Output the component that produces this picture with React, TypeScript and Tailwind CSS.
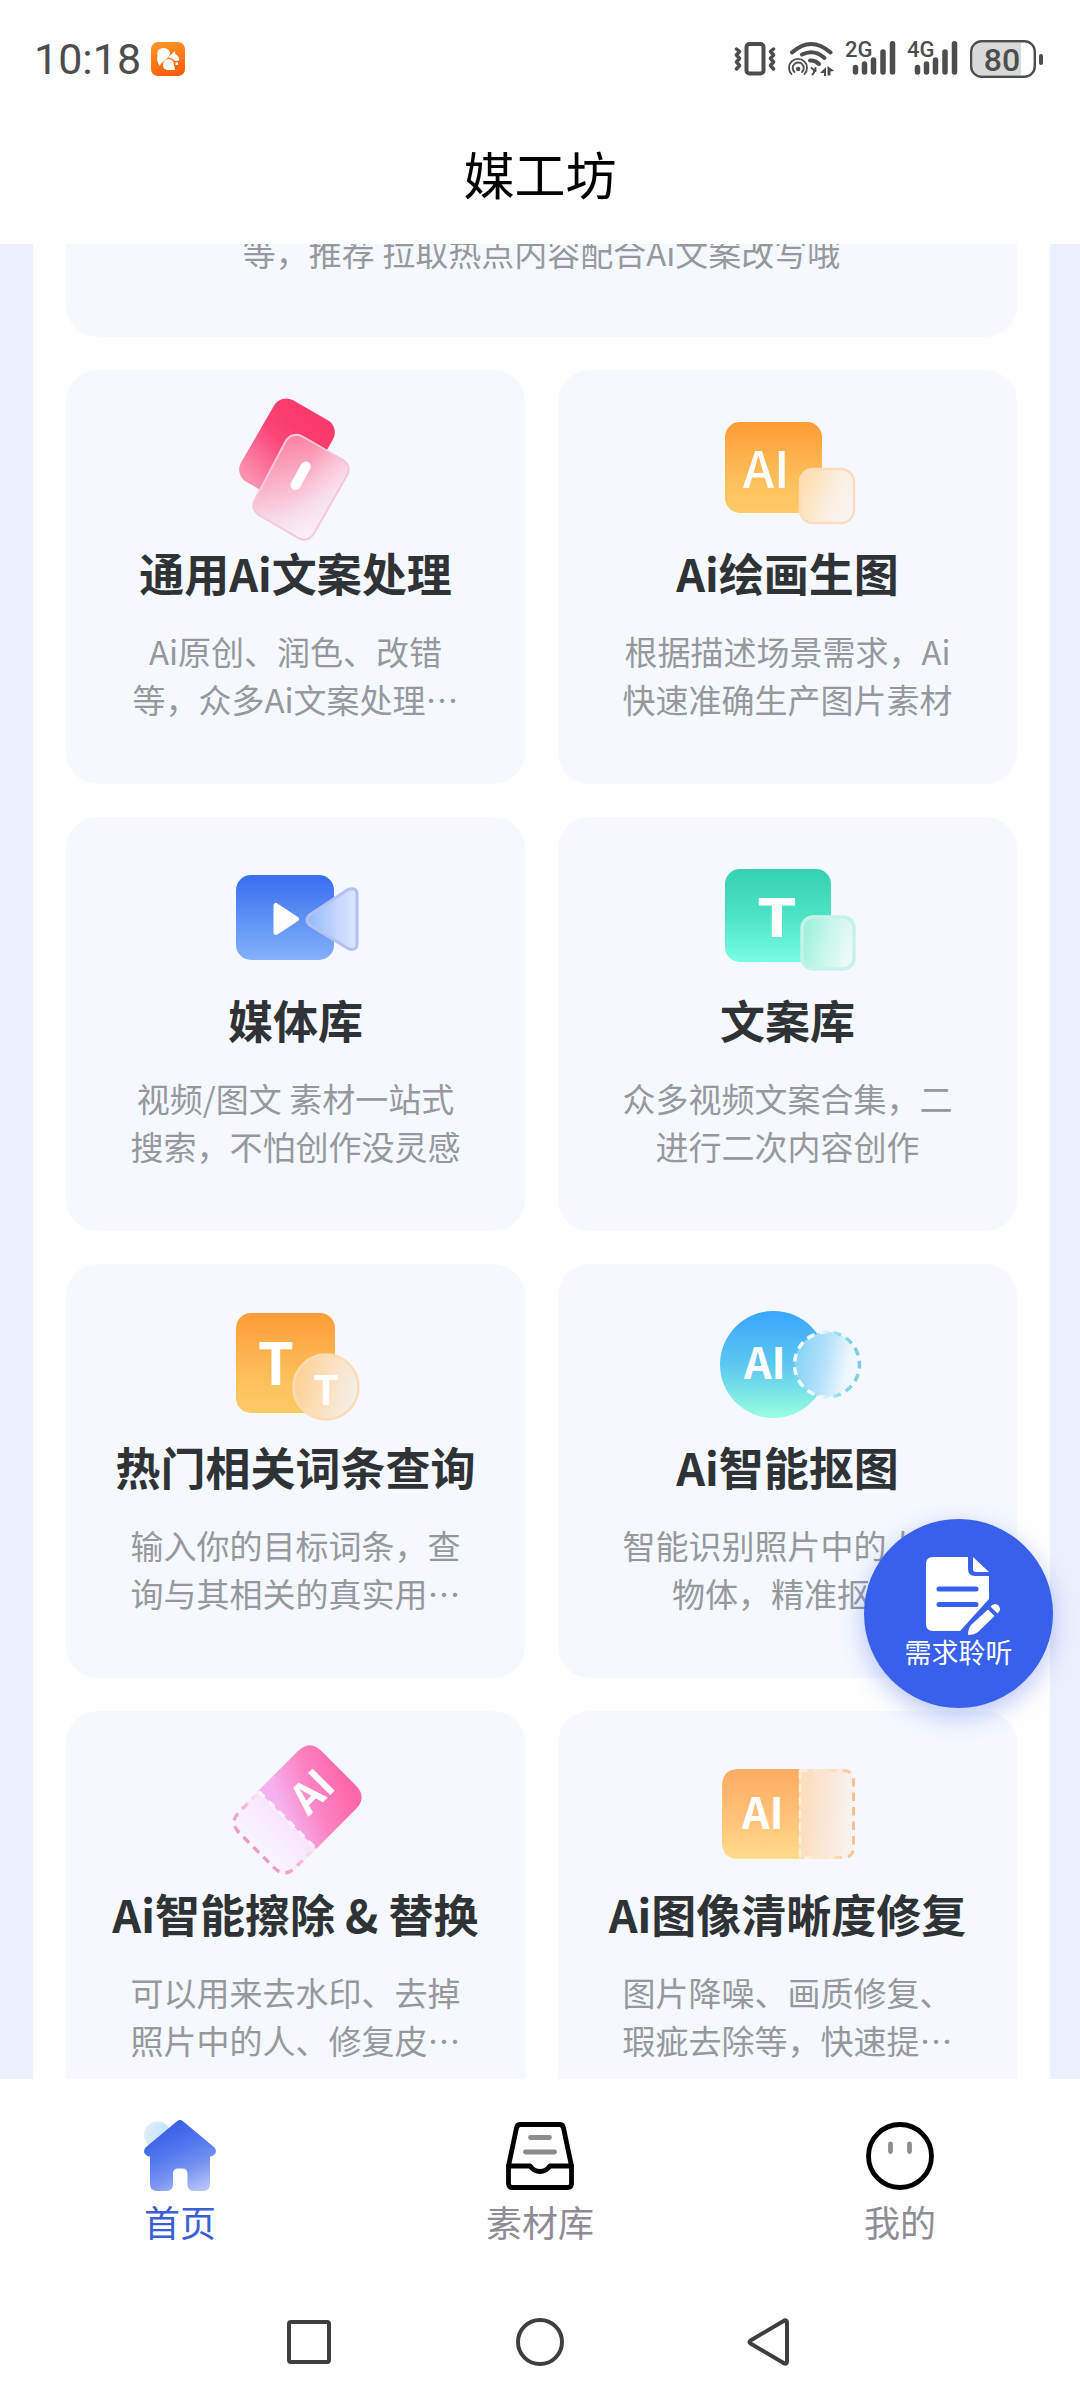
import React from "react";

type Feature = {
  title: string;
  desc: string;
  icon: React.ReactNode;
};

const glyph = "font-['Noto_Sans_CJK_SC',sans-serif] fill-white";

function IconFrame({ children }: { children: React.ReactNode }) {
  return (
    <svg viewBox="1 0 160 156" className="h-[156px] w-40" aria-hidden="true">
      {children}
    </svg>
  );
}

function CopyIcon() {
  return (
    <IconFrame>
      <defs>
        <linearGradient id="copyBack" x1="0.2" y1="0" x2="0" y2="1">
          <stop offset="0.1" stopColor="#f93b6c" />
          <stop offset="0.4" stopColor="#fa4676" />
          <stop offset="0.9" stopColor="#fd8fb0" />
        </linearGradient>
        <linearGradient id="copyFront" gradientUnits="userSpaceOnUse" x1="74" y1="50" x2="96" y2="148">
          <stop offset="0" stopColor="#fb86a6" />
          <stop offset="0.4" stopColor="#fbb2c8" />
          <stop offset="0.7" stopColor="#f8d6e4" />
          <stop offset="1" stopColor="#fbf4fc" />
        </linearGradient>
        <linearGradient id="copySheen" gradientUnits="userSpaceOnUse" x1="84" y1="92" x2="124" y2="112">
          <stop offset="0" stopColor="#f8ecf7" stopOpacity="0" />
          <stop offset="1" stopColor="#f8ecf7" stopOpacity="0.75" />
        </linearGradient>
      </defs>
      <rect x="38" y="14" width="68" height="94" rx="14" transform="rotate(30 72 61)" fill="url(#copyBack)" />
      <path
        d="M77.500 45.500q5-2 11 1.500l39 22.500q9 6 5 15l-33 58q-6 10-15 6l-40-23q-9-6-5-15l31-59q3-5 7-6z"
        fill="url(#copyFront)"
      />
      <path
        d="M77.500 45.500q5-2 11 1.500l39 22.500q9 6 5 15l-33 58q-6 10-15 6l-40-23q-9-6-5-15l31-59q3-5 7-6z"
        fill="url(#copySheen)"
        stroke="#f7c6da"
        strokeWidth="2"
      />
      <path d="M90.700 76.500L80.500 95" stroke="#fff" strokeWidth="10" strokeLinecap="round" />
    </IconFrame>
  );
}

function PaintIcon() {
  return (
    <IconFrame>
      <defs>
        <linearGradient id="paintBack" x1="0" y1="0" x2="0" y2="1">
          <stop offset="0" stopColor="#fe9c36" />
          <stop offset="0.65" stopColor="#fcc05a" />
          <stop offset="1" stopColor="#fdcb66" />
        </linearGradient>
        <linearGradient id="paintFront" x1="0" y1="0.2" x2="1" y2="0.6">
          <stop offset="0" stopColor="#fedcab" />
          <stop offset="0.6" stopColor="#fbeede" />
          <stop offset="1" stopColor="#f8f4f3" />
        </linearGradient>
      </defs>
      <rect x="18" y="32" width="97" height="91" rx="15" fill="url(#paintBack)" />
      <text x="36" y="98" fontSize="50" fontWeight="500" className={glyph}>AI</text>
      <rect x="93" y="79" width="54" height="54" rx="13" fill="url(#paintFront)" stroke="#fddcbd" strokeWidth="2.500" />
    </IconFrame>
  );
}

function MediaIcon() {
  return (
    <IconFrame>
      <defs>
        <linearGradient id="mediaBack" x1="0" y1="0" x2="0" y2="1">
          <stop offset="0.05" stopColor="#3d70f0" />
          <stop offset="0.5" stopColor="#5c91f5" />
          <stop offset="1" stopColor="#84b1fb" />
        </linearGradient>
        <linearGradient id="mediaFront" x1="0" y1="0" x2="1" y2="0">
          <stop offset="0" stopColor="#92b9fb" />
          <stop offset="0.5" stopColor="#bcd1fb" />
          <stop offset="1" stopColor="#dfe8fc" />
        </linearGradient>
      </defs>
      <rect x="21" y="38" width="98" height="85" rx="15" fill="url(#mediaBack)" />
      <path d="M61 68.500v27L81.500 82z" fill="#fff" stroke="#fff" strokeWidth="5" strokeLinejoin="round" />
      <path
        d="M94.500 78L133 52.500q9-3 9 5v49q0 8-9 5L94.500 88q-5-5 0-10z"
        fill="url(#mediaFront)"
        stroke="#b5bff3"
        strokeWidth="3"
        strokeLinejoin="round"
      />
    </IconFrame>
  );
}

function TextLibraryIcon() {
  return (
    <IconFrame>
      <defs>
        <linearGradient id="textBack" x1="0" y1="0" x2="0" y2="1">
          <stop offset="0" stopColor="#34d1b2" />
          <stop offset="0.5" stopColor="#4de3c5" />
          <stop offset="1" stopColor="#78fde3" />
        </linearGradient>
        <linearGradient id="textFront" x1="0" y1="0.3" x2="1" y2="0.6">
          <stop offset="0" stopColor="#9cf1dc" />
          <stop offset="0.55" stopColor="#ccf7ec" />
          <stop offset="1" stopColor="#eefaf9" />
        </linearGradient>
      </defs>
      <rect x="18" y="32" width="106" height="93" rx="15" fill="url(#textBack)" />
      <text x="70" y="100" fontSize="54" fontWeight="700" textAnchor="middle" className="fill-white font-['DejaVu_Sans',sans-serif]">T</text>
      <rect x="95" y="80" width="52" height="52" rx="11" fill="url(#textFront)" stroke="#c5f3e9" strokeWidth="3.500" />
    </IconFrame>
  );
}

function HotWordsIcon() {
  return (
    <IconFrame>
      <defs>
        <linearGradient id="hotBack" x1="0" y1="0" x2="0" y2="1">
          <stop offset="0" stopColor="#fe9c38" />
          <stop offset="0.65" stopColor="#fcc05b" />
          <stop offset="1" stopColor="#fdca65" />
        </linearGradient>
        <linearGradient id="hotFront" x1="0" y1="0.3" x2="1" y2="0.55">
          <stop offset="0" stopColor="#fdd091" />
          <stop offset="0.5" stopColor="#fbe0bd" />
          <stop offset="1" stopColor="#f6efea" />
        </linearGradient>
      </defs>
      <rect x="21" y="29" width="99" height="100" rx="15" fill="url(#hotBack)" />
      <text x="61" y="101" fontSize="58" fontWeight="700" textAnchor="middle" className={glyph}>T</text>
      <circle cx="111" cy="103" r="32.500" fill="url(#hotFront)" stroke="#fddcb5" strokeWidth="2.500" />
      <text x="111" y="121" fontSize="41" fontWeight="700" textAnchor="middle" className={glyph}>T</text>
    </IconFrame>
  );
}

function CutoutIcon() {
  return (
    <IconFrame>
      <defs>
        <linearGradient id="cutBack" x1="0" y1="0" x2="0" y2="1">
          <stop offset="0" stopColor="#3aa6fd" />
          <stop offset="0.5" stopColor="#5cc7f0" />
          <stop offset="1" stopColor="#98ffe0" />
        </linearGradient>
        <linearGradient id="cutFront" x1="0" y1="0.4" x2="1" y2="0.6">
          <stop offset="0" stopColor="#84d2f6" />
          <stop offset="0.45" stopColor="#b4e1fa" />
          <stop offset="0.8" stopColor="#ecf6fe" />
          <stop offset="1" stopColor="#f4f8fe" />
        </linearGradient>
        <linearGradient id="cutRing" x1="0" y1="0" x2="1" y2="0">
          <stop offset="0.4" stopColor="#eefafe" />
          <stop offset="0.7" stopColor="#8edcea" />
          <stop offset="1" stopColor="#76cfe0" />
        </linearGradient>
      </defs>
      <circle cx="66.500" cy="80.500" r="53.500" fill="url(#cutBack)" />
      <text x="37" y="95" fontSize="43" fontWeight="700" className={glyph}>AI</text>
      <circle cx="120" cy="80.500" r="32.500" fill="url(#cutFront)" stroke="url(#cutRing)" strokeWidth="3.500" strokeDasharray="8 5.600" strokeDashoffset="4" />
    </IconFrame>
  );
}

function EraseIcon() {
  return (
    <IconFrame>
      <defs>
        <linearGradient id="eraseBack" gradientUnits="userSpaceOnUse" x1="24" y1="-50" x2="-4" y2="14">
          <stop offset="0" stopColor="#ff68aa" />
          <stop offset="0.5" stopColor="#fc84c4" />
          <stop offset="1" stopColor="#f5b2ee" />
        </linearGradient>
        <linearGradient id="eraseFront" x1="0" y1="0" x2="0" y2="1">
          <stop offset="0" stopColor="#f8e4fa" />
          <stop offset="0.5" stopColor="#f8eefd" />
          <stop offset="1" stopColor="#f8f6fe" />
        </linearGradient>
        <linearGradient id="eraseDash" x1="0" y1="0" x2="0" y2="1">
          <stop offset="0" stopColor="#fce8f4" />
          <stop offset="0.5" stopColor="#f4b6d4" />
          <stop offset="1" stopColor="#ee9cc6" />
        </linearGradient>
      </defs>
      <g transform="translate(82 79) rotate(45)">
        <path d="M-41 14v-56q0-17 17-17h48q17 0 17 17v56z" fill="url(#eraseBack)" />
        <path d="M-41 14v28q0 17 17 17h48q17 0 17-17V14z" fill="url(#eraseFront)" />
        <path d="M-39.500 16v26q0 15 15 15h49q15 0 15-15V16" fill="none" stroke="url(#eraseDash)" strokeWidth="3.500" strokeDasharray="8 6" />
        <path d="M-40 14h80" stroke="#fff1fb" strokeWidth="3.500" strokeDasharray="8 6" />
      </g>
      <text x="-20" y="15" fontSize="42" fontWeight="700" transform="translate(97 61) rotate(-45)" className={glyph}>AI</text>
    </IconFrame>
  );
}

function EnhanceIcon() {
  return (
    <IconFrame>
      <defs>
        <linearGradient id="enhanceBack" x1="0" y1="0" x2="0" y2="1">
          <stop offset="0" stopColor="#ffab62" />
          <stop offset="0.5" stopColor="#ffc077" />
          <stop offset="1" stopColor="#ffdc8b" />
        </linearGradient>
        <linearGradient id="enhanceFront" x1="0" y1="0.4" x2="1" y2="0.5">
          <stop offset="0" stopColor="#fddcba" />
          <stop offset="0.6" stopColor="#faeadd" />
          <stop offset="1" stopColor="#f7f4f5" />
        </linearGradient>
        <linearGradient id="enhanceDash" gradientUnits="userSpaceOnUse" x1="92" y1="0" x2="148" y2="0">
          <stop offset="0" stopColor="#fff0dc" />
          <stop offset="0.6" stopColor="#fde0c2" />
          <stop offset="1" stopColor="#fbc08c" />
        </linearGradient>
      </defs>
      <path d="M92 38v90H32q-17 0-17-17V55q0-17 17-17z" fill="url(#enhanceBack)" />
      <path d="M92 38h44q12 0 12 12v66q0 12-12 12H92z" fill="url(#enhanceFront)" />
      <path d="M92 39.500h44q10.500 0 10.500 10.500v66q0 10.500-10.500 10.500H92" fill="none" stroke="url(#enhanceDash)" strokeWidth="3" strokeDasharray="8.500 6" />
      <path d="M93 40v86" stroke="#fff0dc" strokeWidth="2.500" strokeDasharray="8 5" />
      <text x="35" y="98" fontSize="43" fontWeight="700" className={glyph}>AI</text>
    </IconFrame>
  );
}

const features: Feature[] = [
  { title: "通用Ai文案处理", desc: "Ai原创、润色、改错等，众多Ai文案处理…", icon: <CopyIcon /> },
  { title: "Ai绘画生图", desc: "根据描述场景需求，Ai快速准确生产图片素材", icon: <PaintIcon /> },
  { title: "媒体库", desc: "视频/图文 素材一站式搜索，不怕创作没灵感", icon: <MediaIcon /> },
  { title: "文案库", desc: "众多视频文案合集，二进行二次内容创作", icon: <TextLibraryIcon /> },
  { title: "热门相关词条查询", desc: "输入你的目标词条，查询与其相关的真实用…", icon: <HotWordsIcon /> },
  { title: "Ai智能抠图", desc: "智能识别照片中的人和物体，精准抠图", icon: <CutoutIcon /> },
  { title: "Ai智能擦除 & 替换", desc: "可以用来去水印、去掉照片中的人、修复皮…", icon: <EraseIcon /> },
  { title: "Ai图像清晰度修复", desc: "图片降噪、画质修复、瑕疵去除等，快速提…", icon: <EnhanceIcon /> },
];

function FeatureCard({ title, desc, icon }: Feature) {
  return (
    <a href="#" className="flex flex-col items-center rounded-[32px] bg-[#f5f8ff] pt-5 pb-[61px]">
      {icon}
      <h2 className="text-[45px] leading-[54px] font-bold whitespace-nowrap text-[#303335]">{title}</h2>
      <p className="mt-[27px] w-[340px] text-center text-[33px] leading-[48px] text-[#96989e]">{desc}</p>
    </a>
  );
}

function Signal({ label }: { label: string }) {
  return (
    <svg viewBox="0 0 50 36" className="h-9 w-[50px] overflow-visible" role="img" aria-label={label}>
      <text x="-1" y="16" fontSize="22" fontWeight="500" fill="#4d4d4d" className="font-['Roboto',sans-serif]">{label}</text>
      <path d="M9.500 26.500v4.500M18.500 23v8M27.500 19v12M37 11v20M46.500 2.800v28.200" stroke="#4d4d4d" strokeWidth="5.500" strokeLinecap="round" />
    </svg>
  );
}

function StatusBar() {
  return (
    <div className="flex h-[118px] items-center justify-between pr-9 pl-[34px]">
      <div className="flex items-center gap-2.5">
        <span className="font-['Roboto',sans-serif] text-[43px] leading-[48px] text-[#4d4d4d]">10:18</span>
        <svg viewBox="0 0 34 34" className="size-[34px]" aria-hidden="true">
          <defs>
            <linearGradient id="appTile" x1="0.3" y1="0" x2="0.6" y2="1">
              <stop offset="0" stopColor="#ff9526" />
              <stop offset="1" stopColor="#fe5c0a" />
            </linearGradient>
          </defs>
          <rect width="34" height="34" rx="7" fill="url(#appTile)" />
          <path d="M9 24q-4-5-2.500-10Q5 7 11.500 6q6.500 0 7.500 5 0 2.500-2 4.500l-6 5q-2 1.500-2 3.500z" fill="#fff" />
          <path d="M17 15.500l7-6.500.3 3q3.500 1.500 4 6-2 1.500-5 .5-2.500-3-6.300-3z" fill="#fff" />
          <path d="M12 23.500q0-6 5.500-6.500 5.500.5 5.500 6l1 5h-8q-4-1-4-4.500z" fill="#fff" />
          <path d="M24.500 20.500h2.500v2.500h-2.500z" fill="#fff" />
        </svg>
      </div>
      <div className="flex items-center gap-3">
        <svg viewBox="0 0 42 36" className="h-9 w-[42px]" aria-hidden="true" fill="none" stroke="#4d4d4d">
          <rect x="12.500" y="3" width="17" height="29.500" rx="3" strokeWidth="4" />
          <path d="M2.500 8l3 2.500-3 3.500 3 3.500-3 3.500 3 3.500-3 3.500M39.500 8l-3 2.500 3 3.500-3 3.500 3 3.500-3 3.500 3 3.500" strokeWidth="3.500" strokeLinecap="round" strokeLinejoin="round" />
        </svg>
        <svg viewBox="0 0 46 36" className="h-9 w-[46px]" aria-hidden="true" fill="none" stroke="#4d4d4d" strokeLinecap="round">
          <path d="M4 11.500q19-17 38.500 0" strokeWidth="4" />
          <path d="M14 13.500q12-6 22.500 3.500M22 19.500q5-.5 9 3.500" strokeWidth="4" />
          <path d="M3.500 33a9 9 0 1 1 13 0" strokeWidth="1.800" />
          <path d="M6.500 31a5.500 5.500 0 1 1 7.500 0" strokeWidth="1.800" />
          <circle cx="10.200" cy="28" r="2.200" fill="#4d4d4d" stroke="none" />
          <path d="M23.500 27q5 3 1 6.500M27.500 27v3" strokeWidth="2" />
          <path d="M38 26v9h-2v-3h-4zM39.500 25l7 5-4 .5v4h-3z" fill="#4d4d4d" stroke="none" />
        </svg>
        <Signal label="2G" />
        <Signal label="4G" />
        <svg viewBox="0 0 74 38" className="h-[38px] w-[74px]" role="img" aria-label="80%">
          <path d="M51 3v32H12q-9 0-9-9V12q0-9 9-9z" fill="#d9d9d9" />
          <rect x="1.200" y="1.200" width="63.600" height="35.600" rx="10.500" fill="none" stroke="#4d4d4d" strokeWidth="2.400" />
          <rect x="69" y="14" width="4" height="11" rx="2" fill="#4d4d4d" />
          <text x="32" y="30.500" fontSize="32" fontWeight="500" textAnchor="middle" fill="#4d4d4d" className="font-['Roboto',sans-serif]">80</text>
        </svg>
      </div>
    </div>
  );
}

function HomeIcon() {
  return (
    <svg viewBox="0 0 72 72" className="size-[72px]" aria-hidden="true">
      <defs>
        <linearGradient id="homeBody" x1="0.300" y1="0" x2="0.750" y2="1">
          <stop offset="0" stopColor="#3459e4" />
          <stop offset="0.400" stopColor="#5077ef" />
          <stop offset="0.700" stopColor="#7893f0" />
          <stop offset="1" stopColor="#b4c3f9" />
        </linearGradient>
        <linearGradient id="homeSun" x1="0" y1="0.300" x2="1" y2="0.700">
          <stop offset="0" stopColor="#e2effd" />
          <stop offset="1" stopColor="#bcdcf9" />
        </linearGradient>
      </defs>
      <circle cx="13.500" cy="16" r="13.500" fill="url(#homeSun)" />
      <path
        d="M33 2.200q3-2.600 6 0L70.500 28.500q3 4 0 7-1.500 2-4.500 2V65q0 7-7 7H50q-6.500 0-6.500-7V55q0-5.500-5-5.500h-4.500q-5 0-5 5.500v10q0 7-6.500 7H13q-7 0-7-7V37.500q-3 0-4.500-2-3-3 0-7z"
        fill="url(#homeBody)"
      />
    </svg>
  );
}

function LibraryIcon() {
  return (
    <svg viewBox="0 0 72 72" className="size-[72px]" aria-hidden="true" fill="none" strokeLinecap="round" strokeLinejoin="round">
      <path d="M4.500 47L12.500 9q.7-3.500 4-3.500h39q3.300 0 4 3.500l8 38" stroke="#000" strokeWidth="4.800" />
      <path d="M4.500 47h21.500q4 5.500 10 5.500t10-5.500h21.500v17.500q0 4-4 4h-55q-4 0-4-4z" stroke="#000" strokeWidth="4.800" />
      <path d="M26.500 18.500h19M21.500 33h29" stroke="#8c8c8c" strokeWidth="4.800" />
    </svg>
  );
}

function ProfileIcon() {
  return (
    <svg viewBox="0 0 72 72" className="size-[72px]" aria-hidden="true" fill="none" strokeLinecap="round">
      <circle cx="36" cy="37" r="31.500" stroke="#000" strokeWidth="4.800" />
      <path d="M26.500 25v7.500M45.500 25v7.500" stroke="#8d8c94" strokeWidth="4.800" />
    </svg>
  );
}

const tabs = [
  { label: "首页", icon: <HomeIcon />, active: true },
  { label: "素材库", icon: <LibraryIcon />, active: false },
  { label: "我的", icon: <ProfileIcon />, active: false },
];

export default function App() {
  return (
    <div lang="zh-CN" className="flex h-screen flex-col bg-[#fefefe] font-['Noto_Sans_CJK_SC',sans-serif]">
      <header>
        <StatusBar />
        <div className="flex h-[126px] items-center justify-center pb-4">
          <h1 className="text-[51px] leading-[64px] text-black">媒工坊</h1>
        </div>
      </header>

      <div className="relative min-h-0 flex-1">
        <main className="h-full overflow-hidden bg-[#ecf0fe] pr-[30px] pl-[33px]">
          <div className="bg-[#fefefe] px-[33px]">
            <section className="-mt-4 flex flex-col gap-[33px]">
              <div className="rounded-b-[32px] bg-[#f5f8ff] pb-[61px]">
                <p className="text-center text-[33px] leading-[48px] text-[#96989e]">等，推荐 拉取热点内容配合Ai文案改写哦</p>
              </div>
              <div className="grid grid-cols-2 gap-[33px]">
                {features.map((f) => (
                  <FeatureCard key={f.title} {...f} />
                ))}
              </div>
            </section>
          </div>
        </main>
        <button
          type="button"
          className="absolute right-[27px] bottom-[371px] flex size-[189px] flex-col items-center rounded-full bg-[#3860ea] pt-9 text-white shadow-[0_8px_24px_rgba(56,96,234,0.35)]"
        >
          <svg viewBox="-4 0 80 80" className="ml-1 size-20" aria-hidden="true">
            <path d="M8 2h35v12q0 7 7 7h14v23L35 76H8q-7 0-7-7V9q0-7 7-7z" fill="#fff" />
            <path d="M48 2l16 15H51q-3 0-3-3z" fill="#fff" />
            <path d="M14 34h37M14 49.500h37" stroke="#3860ea" strokeWidth="5" strokeLinecap="round" />
            <path d="M63 54.500l6.500 6.500L53 77q-4 3-10 3 0-6 3-10z" fill="#fff" />
            <path d="M65.500 51.500q4-4.500 8-1 3.500 4-1 8z" fill="#fff" />
          </svg>
          <span className="text-[27px] leading-[34px]">需求聆听</span>
        </button>
      </div>

      <nav className="grid grid-cols-3 pt-10">
        {tabs.map((t) => (
          <a key={t.label} href="#" className="flex flex-col items-center gap-1.5">
            {t.icon}
            <span className={t.active ? "text-[36px] leading-[48px] text-[#3a5fd0]" : "text-[36px] leading-[48px] text-[#8d8c94]"}>
              {t.label}
            </span>
          </a>
        ))}
      </nav>

      <div className="flex items-center justify-center gap-[182px] pt-[73px] pb-[34px]">
        <button type="button" aria-label="最近任务">
          <svg viewBox="0 0 48 48" className="size-12" fill="none" stroke="#3e3e3e" strokeWidth="4">
            <rect x="3" y="4" width="40" height="40" rx="2" />
          </svg>
        </button>
        <button type="button" aria-label="主屏幕">
          <svg viewBox="0 0 48 48" className="size-12" fill="none" stroke="#3e3e3e" strokeWidth="4">
            <circle cx="24" cy="24" r="22" />
          </svg>
        </button>
        <button type="button" aria-label="返回">
          <svg viewBox="0 0 48 48" className="size-12" fill="none" stroke="#3e3e3e" strokeWidth="4" strokeLinejoin="round">
            <path d="M4.500 22.500L38 2.700q3-1.200 3 2v38.600q0 3.200-3 2L4.500 25.500q-2-1.500 0-3z" />
          </svg>
        </button>
      </div>
    </div>
  );
}
